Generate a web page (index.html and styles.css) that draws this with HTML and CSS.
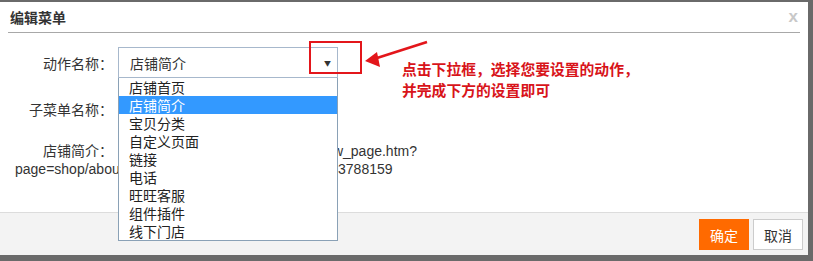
FILE: index.html
```html
<!DOCTYPE html>
<html lang="zh-CN">
<head>
<meta charset="utf-8">
<title>编辑菜单</title>
<link rel="stylesheet" href="styles.css">
</head>
<body>
<div class="frame">
  <div class="dialog">
    <div class="head">
      <span class="title">编辑菜单</span>
      <span class="close">x</span>
    </div>
    <div class="content">
      <div class="row row-action">
        <span class="label">动作名称：</span>
        <div class="select">
          <div class="select-box">
            <span>店铺简介</span>
            <span class="caret">▼</span>
          </div>
          <ul class="listbox">
            <li>店铺首页</li>
            <li class="active">店铺简介</li>
            <li>宝贝分类</li>
            <li>自定义页面</li>
            <li>链接</li>
            <li>电话</li>
            <li>旺旺客服</li>
            <li>组件插件</li>
            <li>线下门店</li>
          </ul>
        </div>
      </div>
      <div class="row row-name">
        <span class="label">子菜单名称：</span>
        <input class="text-input" type="text" value="">
      </div>
      <p class="info"><span class="label">店铺简介：</span> &#8201;http://shop35383788.tmall.com/view_page.htm?<br>page=shop/about.htm?user_number_id=6551893703788159</p>
    </div>
    <div class="footer">
      <button class="btn btn-ok">确定</button>
      <button class="btn btn-cancel">取消</button>
    </div>

    <div class="callout-box"></div>
    <svg class="callout-arrow" width="70" height="32" viewBox="0 0 70 32">
      <line x1="64" y1="2" x2="14" y2="18" stroke="#e3161b" stroke-width="2.5"/>
      <polygon points="2,21 14,12 17,27" fill="#e3161b"/>
    </svg>
    <div class="callout-text">点击下拉框，选择您要设置的动作，<br>并完成下方的设置即可</div>
  </div>
</div>
</body>
</html>
```
FILE: styles.css
```css
* { box-sizing: border-box; }
html, body { margin: 0; padding: 0; }
body {
  width: 813px;
  height: 261px;
  overflow: hidden;
  background: #6a6a6a;
  font-family: "Liberation Sans", "Noto Sans CJK SC", sans-serif;
  font-size: 14px;
  color: #333;
}
.frame {
  height: 261px;
  padding: 2px 5px 6px 0;
}
.dialog {
  position: relative;
  height: 253px;
  background: #fff;
  display: flex;
  flex-direction: column;
}
.head {
  height: 31px;
  margin: 0 8px 0 8px;
  padding: 0 2px 0 2px;
  border-bottom: 1px solid #a8a8a8;
  display: flex;
  align-items: center;
  justify-content: space-between;
}
.title {
  font-family: "Noto Sans CJK SC", sans-serif;
  font-weight: bold;
  font-size: 14px;
  color: #333;
}
.close {
  font-family: "Liberation Sans", sans-serif;
  font-size: 17px;
  color: #c8c8c8;
  font-weight: bold;
}
.content {
  flex: 1;
  padding-top: 14px;
}
.row {
  display: flex;
  align-items: center;
  height: 31px;
}
.label {
  display: inline-block;
  width: 113px;
  text-align: right;
  font-family: "Noto Sans CJK SC", sans-serif;
  color: #333;
}
.select {
  position: relative;
  margin-left: 5px;
  width: 220px;
  height: 31px;
}
.select-box {
  height: 31px;
  border: 1px solid #a7b8cc;
  display: flex;
  align-items: center;
  justify-content: space-between;
  padding: 0 6px 0 11px;
  font-family: "Noto Sans CJK SC", sans-serif;
  background: #fff;
}
.caret {
  font-size: 7px;
  color: #333;
}
.listbox {
  position: absolute;
  z-index: 5;
  top: 100%;
  left: 0;
  width: 220px;
  margin: 0;
  padding: 0;
  list-style: none;
  background: #fff;
  border: 1px solid #8aa1b6;
  border-top: none;
  font-family: "Noto Sans CJK SC", sans-serif;
  font-size: 14px;
}
.listbox li {
  height: 18px;
  line-height: 18px;
  padding-left: 10px;
  color: #222;
}
.listbox li.active {
  background: #3399ff;
  color: #fff;
}
.row-name {
  margin-top: 15px;
}
.text-input {
  margin-left: 5px;
  width: 220px;
  height: 31px;
  border: 1px solid #ccc;
}
.info {
  margin: 17px 0 0 0;
  padding-left: 15px;
  line-height: 18px;
  color: #333;
}
.info .label {
  width: 98px;
}
.footer {
  height: 43px;
  background: #f3f3f3;
  border-top: 1px solid #dcdcdc;
  display: flex;
  justify-content: flex-end;
  align-items: flex-start;
  gap: 4px;
  padding: 6px 5px 0 0;
}
.btn {
  height: 31px;
  width: 50px;
  border: 1px solid #ccc;
  font-family: "Noto Sans CJK SC", sans-serif;
  font-size: 14px;
  padding: 0;
  cursor: pointer;
}
.btn-ok {
  background: #ff6a00;
  border-color: #ff6a00;
  color: #fff;
}
.btn-cancel {
  background: #fff;
  color: #333;
}
.callout-box {
  position: absolute;
  left: 309px;
  top: 39px;
  width: 53px;
  height: 33px;
  border: 2px solid #e3161b;
}
.callout-arrow {
  position: absolute;
  left: 363px;
  top: 38px;
}
.callout-text {
  position: absolute;
  left: 402px;
  top: 56px;
  font-family: "Noto Sans CJK SC", sans-serif;
  font-weight: bold;
  font-size: 14.8px;
  line-height: 21px;
  color: #d8141a;
}
```
